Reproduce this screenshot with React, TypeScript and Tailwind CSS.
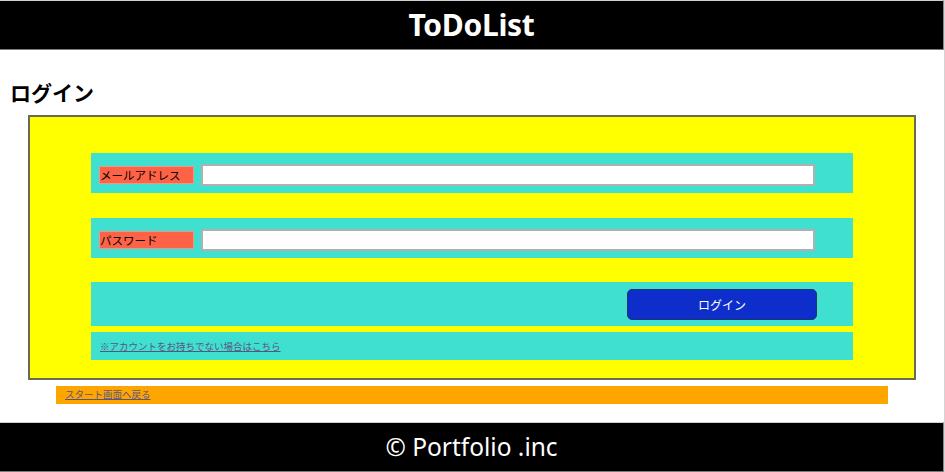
export default function App() {
  const jp = { fontFamily: '"Noto Sans CJK JP", "Noto Sans", sans-serif' };

  return (
    <div className="w-[945px] bg-white border-r border-[#d4d4d4]" style={jp}>
      {/* ヘッダー */}
      <header className="h-[50px] bg-black border-t border-t-[#cfcfcf] border-b border-b-[#7a7a7a] border-r border-r-[#8a8a8a] flex items-center justify-center">
        <h1 className="text-white text-[30px] font-bold leading-none tracking-[-0.3px]" style={{ fontFamily: '"Noto Sans", "Noto Sans CJK JP", sans-serif' }}>
          ToDoList
        </h1>
      </header>

      <main>
        <h2 className="mt-[28px] mb-[9px] pl-[10px] text-[21px] leading-[28px] font-bold text-black">ログイン</h2>

        {/* ログインフォーム */}
        <div className="mx-[28px] w-[888px] bg-[#ffff00] border-2 border-[#6b6a55] pt-[36px] pb-[18px]">
          <div className="w-[762px] mx-auto flex flex-col">
            <div className="h-[40px] bg-[#40e0d0] flex items-start pt-[11px] pl-[8px]">
              <label className="mt-[2px] w-[95px] h-[18px] bg-[#ff6347] border border-[#e89a88] text-[11.5px] leading-[16px] text-black whitespace-nowrap">
                メールアドレス
              </label>
              <input type="email" className="ml-[7px] w-[614px] h-[22px] bg-white border-2 border-[#b0b0b0] outline-none" />
            </div>

            <div className="mt-[25px] h-[40px] bg-[#40e0d0] flex items-start pt-[11px] pl-[8px]">
              <label className="mt-[2px] w-[95px] h-[18px] bg-[#ff6347] border border-[#e89a88] text-[11.5px] leading-[16px] text-black whitespace-nowrap">
                パスワード
              </label>
              <input type="password" className="ml-[7px] w-[614px] h-[22px] bg-white border-2 border-[#b0b0b0] outline-none" />
            </div>

            <div className="mt-[24px] h-[44px] bg-[#40e0d0] flex items-start justify-end pt-[7px] pr-[36px]">
              <button className="w-[190px] h-[31px] bg-[#0e2ecb] border border-[#1c3566] rounded-[5px] text-white text-[12px] leading-none">
                ログイン
              </button>
            </div>

            <div className="mt-[6px] h-[28px] bg-[#40e0d0] flex items-center pl-[9px] pt-[2px]">
              <a href="#" className="text-[9.5px] leading-none text-[#5a5580] underline">
                ※アカウントをお持ちでない場合はこちら
              </a>
            </div>
          </div>
        </div>

        <div className="mt-[6px] ml-[56px] w-[832px] h-[18px] bg-[#ffa500] flex items-center pl-[9px]">
          <a href="#" className="text-[9.5px] leading-none text-[#5a5580] underline">
            スタート画面へ戻る
          </a>
        </div>
      </main>

      {/* フッター */}
      <footer className="mt-[18px] h-[50px] bg-black border-t border-t-[#cfcfcf] border-b border-b-[#7a7a7a] border-r border-r-[#8a8a8a] flex items-center justify-center">
        <p className="text-white text-[24.5px] leading-none" style={{ fontFamily: '"Noto Sans", "Noto Sans CJK JP", sans-serif' }}>
          © Portfolio .inc
        </p>
      </footer>
    </div>
  );
}
